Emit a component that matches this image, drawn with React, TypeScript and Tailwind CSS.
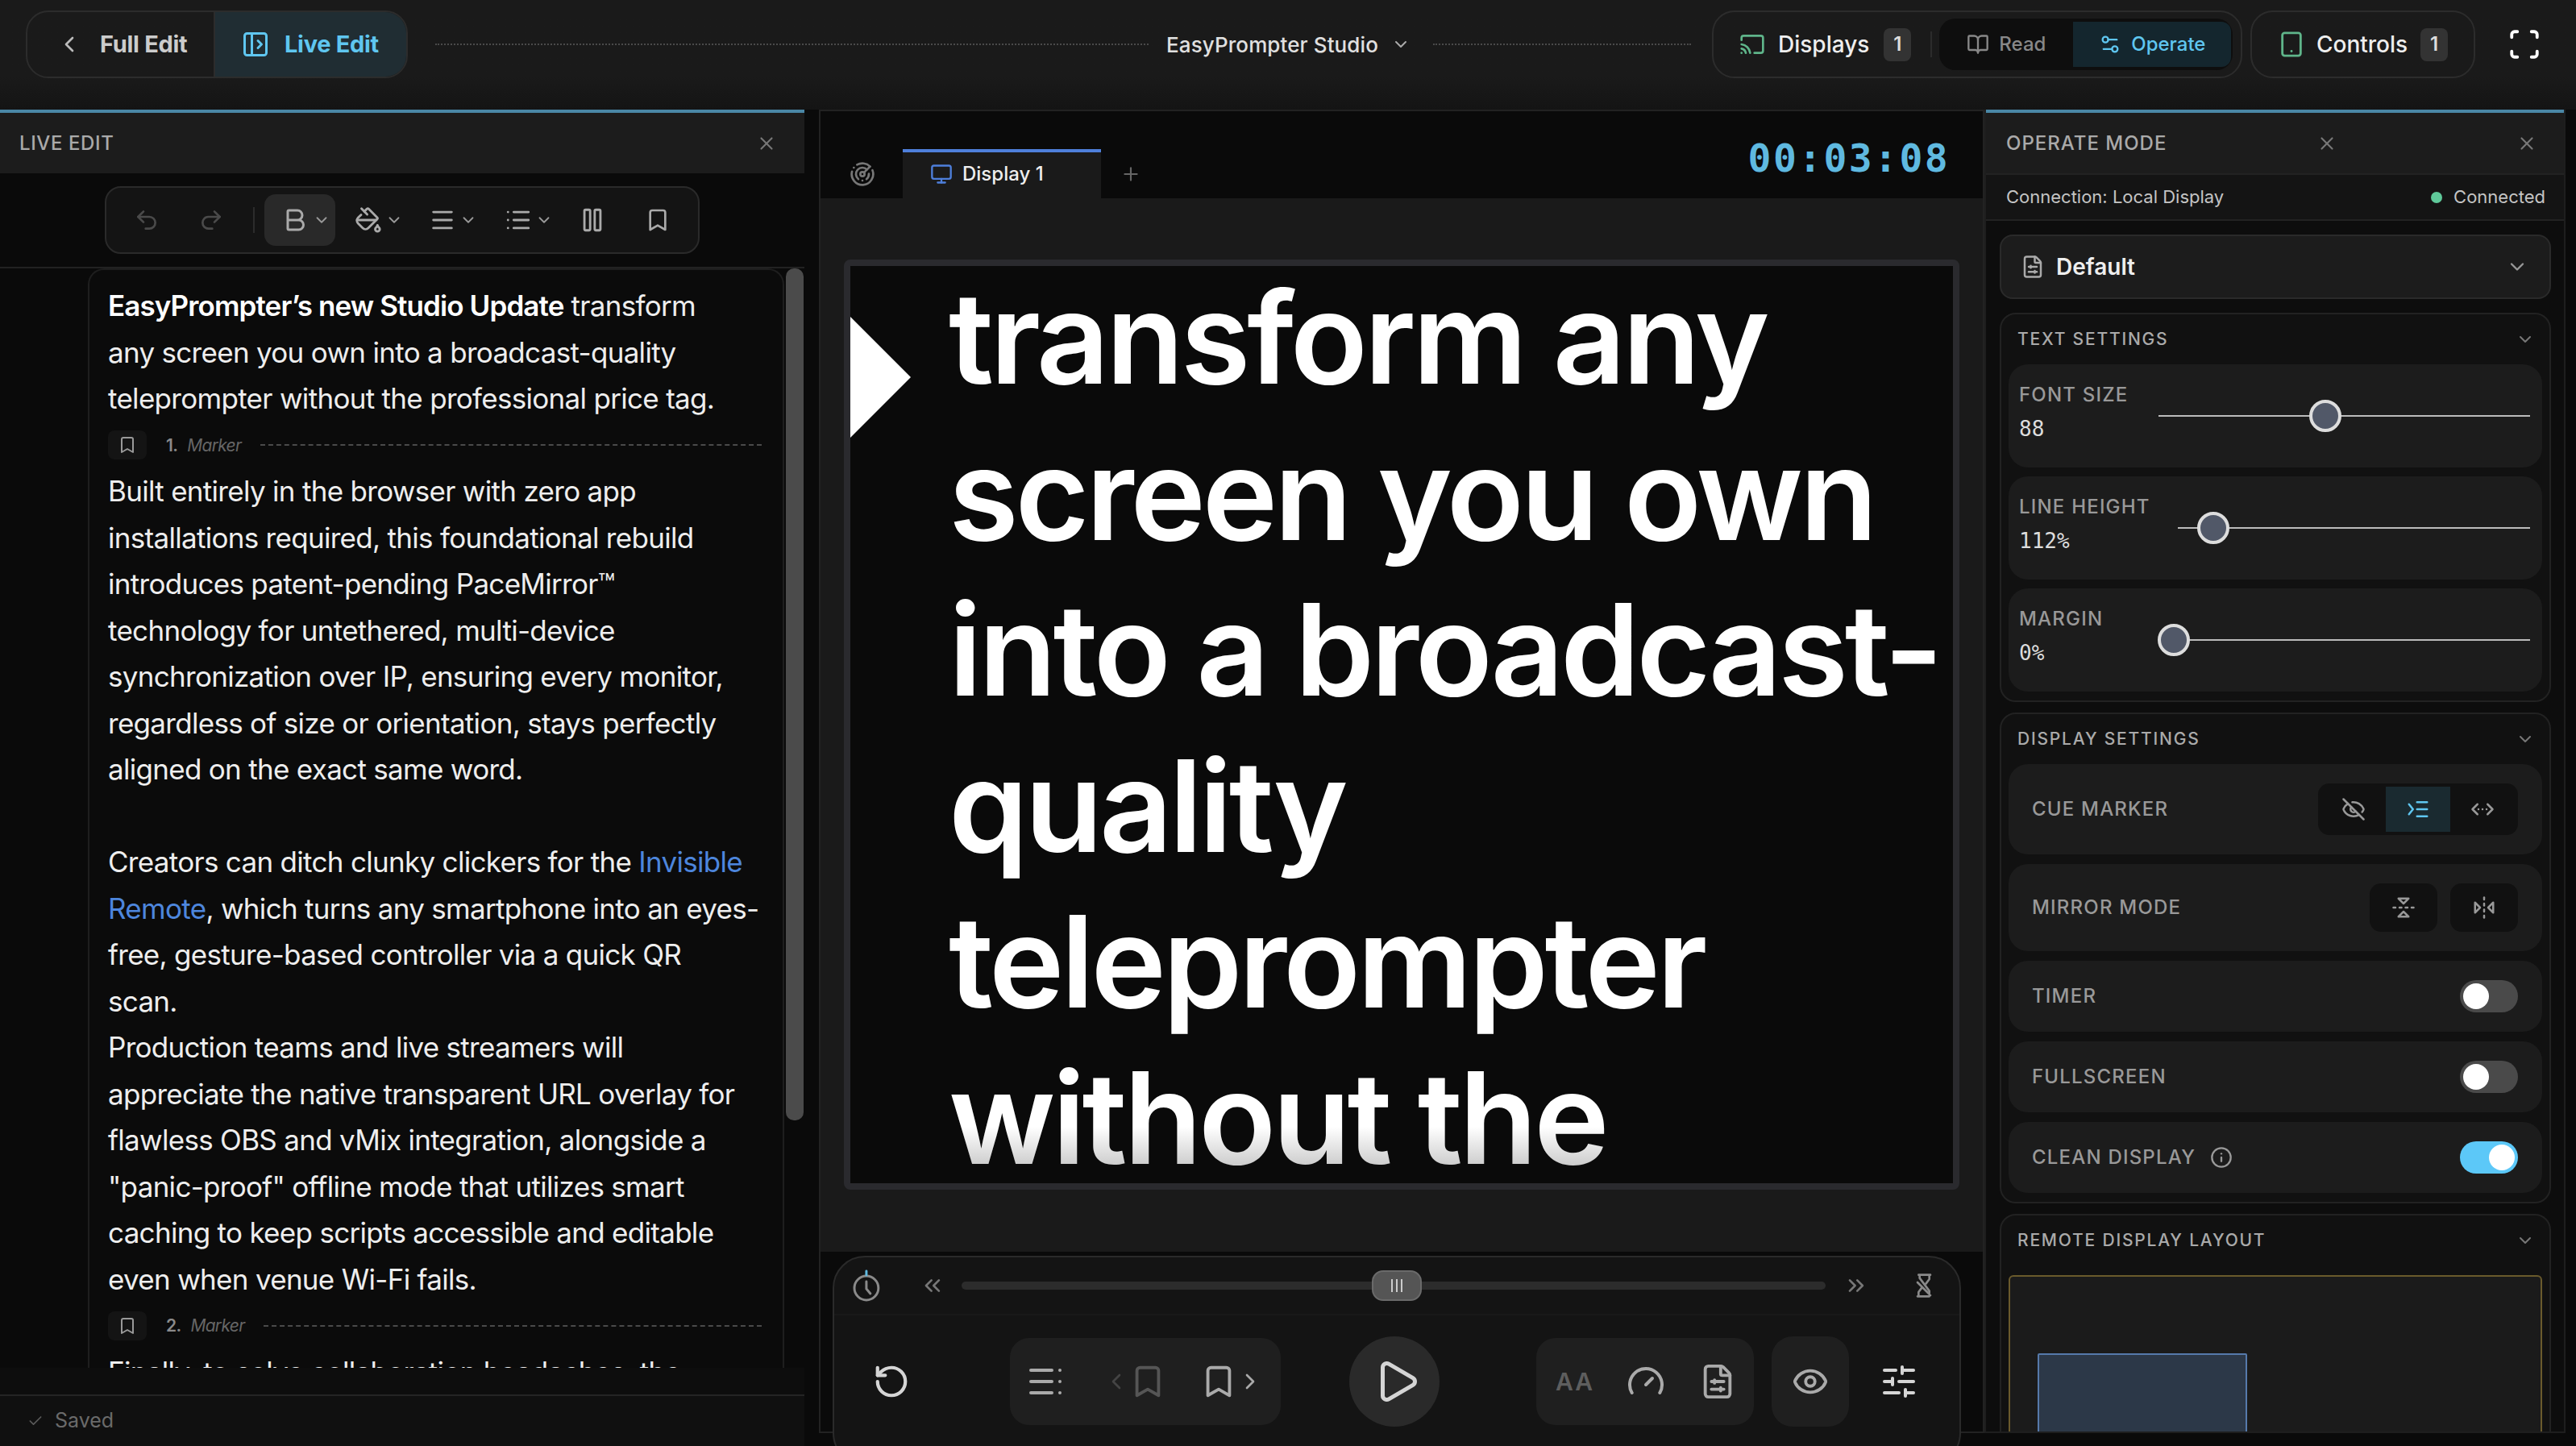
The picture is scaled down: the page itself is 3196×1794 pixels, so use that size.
import {
  Bold, Bookmark, BookOpen, Cast, ChevronDown, ChevronLeft, ChevronRight, ChevronsLeft, ChevronsLeftRightEllipsis, ChevronsRight,
  Check, Eye, EyeOff, FileSliders, FlipHorizontal2, FlipVertical2, Gauge, Info, List, Menu, Monitor, PaintBucket, PanelLeftOpen,
  Pause, Play, Plus, Radar, Redo2, RotateCcw, Scan, Settings2, SlidersHorizontal, Tablet, Undo2, X,
} from "lucide-react"

function Badge() {
  return <div className="flex h-[41px] w-[34px] items-center justify-center rounded-[8px] bg-[#333333] text-[24px] font-semibold text-[#dddddd]">1</div>
}

function ToolChevron() {
  return <ChevronDown size={22} className="text-[#999999]" />
}

function Marker({ n }: { n: number }) {
  return (
    <div className="flex h-[57.5px] items-center">
      <div className="flex h-[36px] w-[48px] items-center justify-center rounded-[8px] bg-[#141414]">
        <Bookmark size={24} className="text-[#999999]" />
      </div>
      <span className="ml-[24px] text-[21px] font-semibold text-[#8a8a8a]">{n}.</span>
      <span className="ml-[12px] text-[21px] italic text-[#666666]">Marker</span>
      <div className="ml-[24px] flex-1 border-t-2 border-dashed border-[#4a4a4a]" />
    </div>
  )
}

function LivePanel() {
  return (
    <div className="flex h-[1658px] w-[998px] shrink-0 flex-col bg-[#0a0a0a]">
      <div className="flex h-[79px] items-center justify-between border-t-4 border-[#4a87a6] bg-[#1c1c1c] pl-[24px] pr-[34px]">
        <span className="text-[24px] font-medium tracking-[0.6px] text-[#aaaaaa]">LIVE EDIT</span>
        <X size={26} className="text-[#777777]" />
      </div>
      <div className="flex h-[118px] items-center border-b-2 border-[#222222] pl-[130px]">
        <div className="flex h-[84px] w-[738px] items-center rounded-[20px] border-2 border-[#2a2a2a] bg-[#141414] pl-[34px]">
          <Undo2 size={32} className="text-[#4a4a4a]" />
          <Redo2 size={32} className="ml-[48px] text-[#4a4a4a]" />
          <div className="ml-[36px] h-[32px] w-[2px] bg-[#2c2c2c]" />
          <div className="ml-[12px] flex h-[64px] w-[88px] items-center gap-[4px] rounded-[14px] bg-[#292929] pl-[20px]">
            <Bold size={36} className="text-[#aaaaaa]" />
            <ToolChevron />
          </div>
          <div className="ml-[24px] flex w-[66px] items-center gap-[4px]">
            <PaintBucket size={34} className="text-[#aaaaaa]" />
            <ToolChevron />
          </div>
          <div className="ml-[26px] flex w-[66px] items-center gap-[4px]">
            <Menu size={34} className="text-[#aaaaaa]" />
            <ToolChevron />
          </div>
          <div className="ml-[28px] flex w-[66px] items-center gap-[4px]">
            <List size={34} className="text-[#aaaaaa]" />
            <ToolChevron />
          </div>
          <Pause size={34} className="ml-[26px] text-[#aaaaaa]" />
          <Bookmark size={32} className="ml-[48px] text-[#aaaaaa]" />
        </div>
      </div>
      <div className="flex h-[1364px] overflow-hidden">
        <div className="ml-[109px] h-[1500px] w-[864px] rounded-t-[20px] border-x-2 border-t-2 border-[#1e1e1e] bg-[#0b0b0b] pl-[23px] pr-[26px] pt-[16px] text-[35px] leading-[57.5px] tracking-[-0.7px] text-[#eeeeee]">
          <p><b className="font-semibold tracking-[-0.9px] text-white">EasyPrompter’s new Studio Update</b> transform<br />any screen you own into a broadcast-quality teleprompter without the professional price tag.</p>
          <Marker n={1} />
          <p>Built entirely in the browser with zero app installations required, this foundational rebuild introduces patent-pending PaceMirror™ technology for untethered, multi-device synchronization over IP, ensuring every monitor, regardless of size or orientation, stays perfectly aligned on the exact same word.</p>
          <p className="h-[57.5px]" />
          <p>Creators can ditch clunky clickers for the <span className="text-[#4d86dd]">Invisible Remote</span>, which turns any smartphone into an eyes-<br />free, gesture-based controller via a quick QR<br />scan.</p>
          <p>Production teams and live streamers will appreciate the native transparent URL overlay for flawless OBS and vMix integration, alongside a "panic-proof" offline mode that utilizes smart caching to keep scripts accessible and editable even when venue Wi-Fi fails.</p>
          <Marker n={2} />
          <p>Finally, to solve collaboration headaches, the</p>
        </div>
        <div className="ml-[2px] h-[1057px] w-[22px] rounded-[10px] bg-[#4b4b4b]" />
      </div>
      <div className="h-[33px] bg-[#0d0d0d]" />
      <div className="flex h-[64px] items-center gap-[14px] border-t-2 border-[#242424] bg-[#101010] pl-[34px] text-[25px] text-[#6a6a6a]">
        <Check size={20} className="text-[#5a5a5a]" />
        <span>Saved</span>
      </div>
    </div>
  )
}

function StopwatchIcon() {
  return (
    <svg width="36" height="44" viewBox="0 0 36 44" fill="none" stroke="#8a8a8a" strokeWidth="3" strokeLinecap="round">
      <circle cx="18" cy="25" r="15" />
      <path d="M18 17v9l5 6" />
      <path d="M18 4v5" stroke="#5fb9e0" />
    </svg>
  )
}

function HourglassOffIcon() {
  return (
    <svg width="32" height="36" viewBox="0 0 24 24" fill="none" stroke="#8a8a8a" strokeWidth="2" strokeLinecap="round" strokeLinejoin="round">
      <path d="M7 2h11M6 22h11M8 2v3l9 12v5M17 2v4l-3 4M7 22v-4l3-4M6 9l12 12" />
    </svg>
  )
}

function ControlPanel() {
  return (
    <div className="relative z-10 ml-[15px] h-[260px] w-[1400px] shrink-0 rounded-[40px] border-2 border-[#2a2a2a] bg-[#141414]">
      <div className="flex h-[72px] items-center border-b-2 border-[#191919] pl-[22px] pr-[28px]">
        <StopwatchIcon />
        <ChevronsLeft size={32} className="ml-[48px] text-[#777777]" />
        <div className="relative ml-[20px] h-[10px] w-[1078px] rounded-full bg-[#2c2c2c]">
          <div className="absolute left-[509px] top-[-14px] flex h-[38px] w-[62px] items-center justify-center gap-[4px] rounded-[14px] border-2 border-[#6a6a6a] bg-[#555555]">
            <div className="h-[16px] w-[2px] bg-[#cccccc]" />
            <div className="h-[16px] w-[2px] bg-[#cccccc]" />
            <div className="h-[16px] w-[2px] bg-[#cccccc]" />
          </div>
        </div>
        <ChevronsRight size={32} className="ml-[22px] text-[#777777]" />
        <div className="ml-[52px]"><HourglassOffIcon /></div>
      </div>
      <div className="flex h-[164px] items-center pl-[48px]">
        <RotateCcw size={46} strokeWidth={2.2} className="text-[#d5d5d5]" />
        <div className="ml-[124px] flex h-[108px] w-[336px] items-center rounded-[24px] bg-[#1f1f1f] pl-[20px]">
          <List size={48} className="-scale-x-100 text-[#aaaaaa]" />
          <ChevronLeft size={32} className="ml-[48px] text-[#444444]" />
          <Bookmark size={46} className="text-[#555555]" />
          <Bookmark size={46} className="ml-[42px] text-[#aaaaaa]" />
          <ChevronRight size={32} className="text-[#aaaaaa]" />
        </div>
        <div className="ml-[85px] flex h-[112px] w-[112px] items-center justify-center rounded-full bg-[#2a2a2a]">
          <Play size={60} className="ml-[6px] text-[#d5d5d5]" />
        </div>
        <div className="ml-[120px] flex h-[108px] w-[270px] items-center rounded-[24px] bg-[#1f1f1f] pl-[24px]">
          <span className="text-[30px] font-semibold tracking-[2px] text-[#5e5e5e]">AA</span>
          <Gauge size={48} className="ml-[40px] text-[#aaaaaa]" />
          <FileSliders size={46} className="ml-[42px] text-[#aaaaaa]" />
        </div>
        <div className="ml-[22px] flex h-[112px] w-[96px] items-center justify-center rounded-[26px] bg-[#1f1f1f]">
          <Eye size={46} className="text-[#aaaaaa]" />
        </div>
        <SlidersHorizontal size={48} className="ml-[38px] text-[#d5d5d5]" />
      </div>
    </div>
  )
}

function Stage() {
  return (
    <div className="flex h-[1642px] w-[1446px] shrink-0 flex-col border-x-2 border-b-2 border-t-2 border-[#222222] bg-[#0a0a0a]">
      <div className="flex h-[108px] shrink-0 items-end bg-[#0a0a0a]">
        <div className="flex h-[61px] items-center pl-[36px]">
          <Radar size={32} className="text-[#777777]" />
        </div>
        <div className="ml-[34px] flex h-[61px] w-[246px] items-center gap-[12px] border-t-4 border-[#4e7fdb] bg-[#1a1a1a] pb-[4px] pl-[34px]">
          <Monitor size={28} className="text-[#4e7fdb]" />
          <span className="text-[24px] font-medium text-[#eeeeee]">Display 1</span>
        </div>
        <div className="flex h-[61px] items-center pl-[24px]">
          <Plus size={26} className="text-[#666666]" />
        </div>
        <div className="ml-auto flex h-[100px] items-center pr-[41px] font-['DejaVu_Sans_Mono',monospace] text-[48px] font-bold tracking-[2.4px] text-[#5fb9e0]">
          00:03:08
        </div>
      </div>
      <div className="flex h-[1307px] shrink-0 flex-col bg-[#1a1a1a] px-[29px] pt-[76px]">
        <div className="relative h-[1154px] w-[1384px] overflow-hidden rounded-[8px] border-8 border-[#2a2a2e] bg-[#0a0a0a] pl-[122px] text-[158px] font-semibold leading-[193.6px] tracking-[-4.2px] text-white">
          <div className="absolute left-0 top-[63px] h-[150px] w-[75px] bg-white [clip-path:polygon(0_0,100%_50%,0_100%)]" />
          <div className="-mt-[8px]">transform any screen you own into a broadcast-quality teleprompter without the professional price tag.</div>
          <div className="absolute bottom-0 left-0 h-[70px] w-full bg-gradient-to-b from-transparent to-[#0a0a0a]/30" />
        </div>
      </div>
      <div className="h-[5px] shrink-0" />
      <ControlPanel />
    </div>
  )
}

function SectionHead({ title }: { title: string }) {
  return (
    <div className="flex h-[62px] items-center justify-between pl-[20px] pr-[18px] text-[21px] font-medium tracking-[1.8px] text-[#aaaaaa]">
      <span>{title}</span>
      <ChevronDown size={24} className="text-[#777777]" />
    </div>
  )
}

function SliderRow({ label, value, pos }: { label: string; value: string; pos: number }) {
  return (
    <div className="flex h-[128px] items-center gap-[34px] rounded-[24px] bg-[#1c1c1c] pl-[13px] pr-[15px]">
      <div className="min-w-[139px] pb-[12px]">
        <div className="whitespace-nowrap text-[24px] font-medium tracking-[1.2px] text-[#999999]">{label}</div>
        <div className="mt-[8px] font-['DejaVu_Sans_Mono',monospace] text-[26px] leading-[32px] text-[#dddddd]">{value}</div>
      </div>
      <div className="relative h-[2px] flex-1 bg-[#bbbbbb]">
        <div className="absolute top-[-19px] h-[40px] w-[40px] -translate-x-1/2 rounded-full border-4 border-[#dddddd] bg-[#515868]" style={{ left: `${pos}px` }} />
      </div>
    </div>
  )
}

function Toggle({ on }: { on?: boolean }) {
  return (
    <div className={on ? "flex h-[40px] w-[72px] items-center justify-end rounded-full bg-[#5cc8f8] px-[4px]" : "flex h-[40px] w-[72px] items-center rounded-full bg-[#4a4a4a] px-[4px]"}>
      <div className="h-[32px] w-[32px] rounded-full bg-white" />
    </div>
  )
}

function LabelRow({ label, h, children }: { label: React.ReactNode; h: string; children: React.ReactNode }) {
  return (
    <div className={`${h} flex items-center justify-between rounded-[24px] bg-[#1c1c1c] pl-[29px] pr-[30px]`}>
      <div className="flex items-center gap-[18px] text-[24px] font-medium tracking-[1.2px] text-[#999999]">{label}</div>
      {children}
    </div>
  )
}

function IndentIcon() {
  return (
    <svg width="30" height="30" viewBox="0 0 24 24" fill="none" stroke="#5fc6f0" strokeWidth="2" strokeLinecap="round" strokeLinejoin="round">
      <path d="M3 7l4 5-4 5M11 5h10M11 12h10M11 19h10" />
    </svg>
  )
}

function OperatePanel() {
  return (
    <div className="flex h-[1642px] w-[721px] shrink-0 flex-col overflow-hidden border-x-2 border-b-2 border-[#1e1e1e] bg-[#0d0d0d]">
      <div className="flex h-[79px] shrink-0 items-center border-t-4 border-[#4a87a6] bg-[#1c1c1c] pl-[25px] pr-[33px]">
        <span className="text-[24px] font-medium tracking-[1px] text-[#aaaaaa]">OPERATE MODE</span>
        <X size={26} className="ml-auto mr-[222px] text-[#777777]" />
        <X size={26} className="text-[#777777]" />
      </div>
      <div className="flex h-[59px] shrink-0 items-center justify-between border-y-2 border-[#222222] bg-[#141414] pl-[25px] pr-[23px] text-[22px] text-[#c4c4c4]">
        <span>Connection: Local Display</span>
        <span className="flex items-center gap-[14px]">
          <span className="h-[14px] w-[14px] rounded-full bg-[#5fc99a]" />
          Connected
        </span>
      </div>
      <div className="flex flex-col gap-[13px] pl-[17px] pr-[16px] pt-[17px]">
        <div className="mb-[4px] flex h-[80px] items-center rounded-[16px] border-2 border-[#2a2a2a] bg-[#1c1c1c] pl-[24px] pr-[26px]">
          <FileSliders size={30} className="text-[#aaaaaa]" />
          <span className="ml-[14px] text-[28px] font-semibold text-[#eeeeee]">Default</span>
          <ChevronDown size={28} className="ml-auto text-[#999999]" />
        </div>
        <div className="rounded-[20px] border-2 border-[#222222] bg-[#111111] px-[9px] pb-[11px]">
          <div className="-mx-[9px]"><SectionHead title="TEXT SETTINGS" /></div>
          <div className="flex flex-col gap-[11px]">
            <SliderRow label="FONT SIZE" value="88" pos={207} />
            <SliderRow label="LINE HEIGHT" value="112%" pos={44} />
            <SliderRow label="MARGIN" value="0%" pos={19} />
          </div>
        </div>
        <div className="rounded-[20px] border-2 border-[#222222] bg-[#111111] px-[9px] pb-[11px]">
          <div className="-mx-[9px]"><SectionHead title="DISPLAY SETTINGS" /></div>
          <div className="flex flex-col gap-[12px]">
            <LabelRow label="CUE MARKER" h="h-[112px]">
              <div className="flex h-[64px] w-[248px] items-center rounded-[14px] bg-[#111111] px-[4px]">
                <div className="flex w-[80px] justify-center"><EyeOff size={30} className="text-[#999999]" /></div>
                <div className="flex h-[56px] w-[80px] items-center justify-center bg-[#1a2a30]"><IndentIcon /></div>
                <div className="flex w-[80px] justify-center"><ChevronsLeftRightEllipsis size={30} className="text-[#999999]" /></div>
              </div>
            </LabelRow>
            <LabelRow label="MIRROR MODE" h="h-[108px]">
              <div className="flex gap-[16px]">
                <div className="flex h-[60px] w-[84px] items-center justify-center rounded-[14px] bg-[#111111]"><FlipVertical2 size={30} className="text-[#999999]" /></div>
                <div className="flex h-[60px] w-[84px] items-center justify-center rounded-[14px] bg-[#111111]"><FlipHorizontal2 size={30} className="text-[#999999]" /></div>
              </div>
            </LabelRow>
            <LabelRow label="TIMER" h="h-[88px]"><Toggle /></LabelRow>
            <LabelRow label="FULLSCREEN" h="h-[88px]"><Toggle /></LabelRow>
            <LabelRow label={<>CLEAN DISPLAY<Info size={28} className="text-[#999999]" /></>} h="h-[88px]"><Toggle on /></LabelRow>
          </div>
        </div>
        <div className="rounded-[20px] border-2 border-[#222222] bg-[#111111] px-[9px] pb-[11px]">
          <div className="-mx-[9px] mb-[12px]"><SectionHead title="REMOTE DISPLAY LAYOUT" /></div>
          <div className="h-[400px] rounded-[6px] border-2 border-[#6a5a2c] bg-[#1b1b1b] pl-[34px] pt-[95px]">
            <div className="h-[280px] w-[260px] rounded-[2px] border-2 border-[#567aab] bg-[#2c3848]" />
          </div>
        </div>
      </div>
    </div>
  )
}

export default function App() {
  return (
    <div className="h-[1794px] w-[3196px] overflow-hidden bg-[#0a0a0a] font-['Inter',sans-serif]">
      <div className="flex h-[136px] items-start bg-gradient-to-b from-[#1a1a1a] from-70% to-[#141414] pl-[32px] pt-[13px]">
        <div className="flex h-[84px] items-center">
          <div className="flex h-[84px] w-[474px] overflow-hidden rounded-[28px] border-2 border-[#2c2c2c] text-[29px] font-bold tracking-[-0.3px]">
            <div className="flex w-[233px] items-center gap-[22px] border-r-2 border-[#2c2c2c] pl-[36px] text-[#cccccc]">
              <ChevronLeft size={32} className="text-[#bbbbbb]" />
              <span>Full Edit</span>
            </div>
            <div className="flex flex-1 items-center gap-[18px] bg-[#202d33] pl-[32px] text-[#5fc6f0]">
              <PanelLeftOpen size={36} />
              <span>Live Edit</span>
            </div>
          </div>
          <div className="ml-[34px] w-[885px] border-t-2 border-dotted border-[#4a4a4a]" />
          <div className="ml-[22px] flex items-center gap-[16px] text-[26px] font-medium tracking-[0.1px] text-[#e0e0e0]">
            <span>EasyPrompter Studio</span>
            <ChevronDown size={24} className="text-[#aaaaaa]" />
          </div>
          <div className="ml-[28px] w-[320px] border-t-2 border-dotted border-[#4a4a4a]" />
          <div className="ml-[26px] flex h-[84px] w-[658px] items-center rounded-[28px] border-2 border-[#2c2c2c] pl-[32px]">
            <Cast size={32} className="text-[#5fb58a]" />
            <span className="ml-[16px] text-[28px] font-medium text-[#eeeeee]">Displays</span>
            <div className="ml-[18px]"><Badge /></div>
            <div className="ml-[24px] h-[32px] w-[2px] bg-[#2c2c2c]" />
            <div className="ml-[9px] flex h-[64px] w-[364px] items-center rounded-[20px] bg-[#0e0e0e] pr-[2px] text-[24px] font-medium">
              <div className="flex w-[166px] items-center justify-center gap-[12px] text-[#888888]">
                <BookOpen size={28} />
                <span>Read</span>
              </div>
              <div className="flex h-[56px] flex-1 items-center justify-center gap-[12px] rounded-r-[12px] bg-[#14262e] text-[#5fc6f0]">
                <Settings2 size={28} />
                <span>Operate</span>
              </div>
            </div>
          </div>
          <div className="ml-[10px] flex h-[84px] w-[279px] items-center rounded-[28px] border-2 border-[#2c2c2c] pl-[32px]">
            <Tablet size={34} className="text-[#5fb58a]" />
            <span className="ml-[14px] text-[28px] font-medium text-[#eeeeee]">Controls</span>
            <div className="ml-[16px]"><Badge /></div>
          </div>
          <Scan size={42} strokeWidth={2.2} className="ml-[40px] text-white" />
        </div>
      </div>
      <div className="flex items-start">
        <LivePanel />
        <div className="w-[18px] shrink-0" />
        <Stage />
        <OperatePanel />
      </div>
    </div>
  )
}
